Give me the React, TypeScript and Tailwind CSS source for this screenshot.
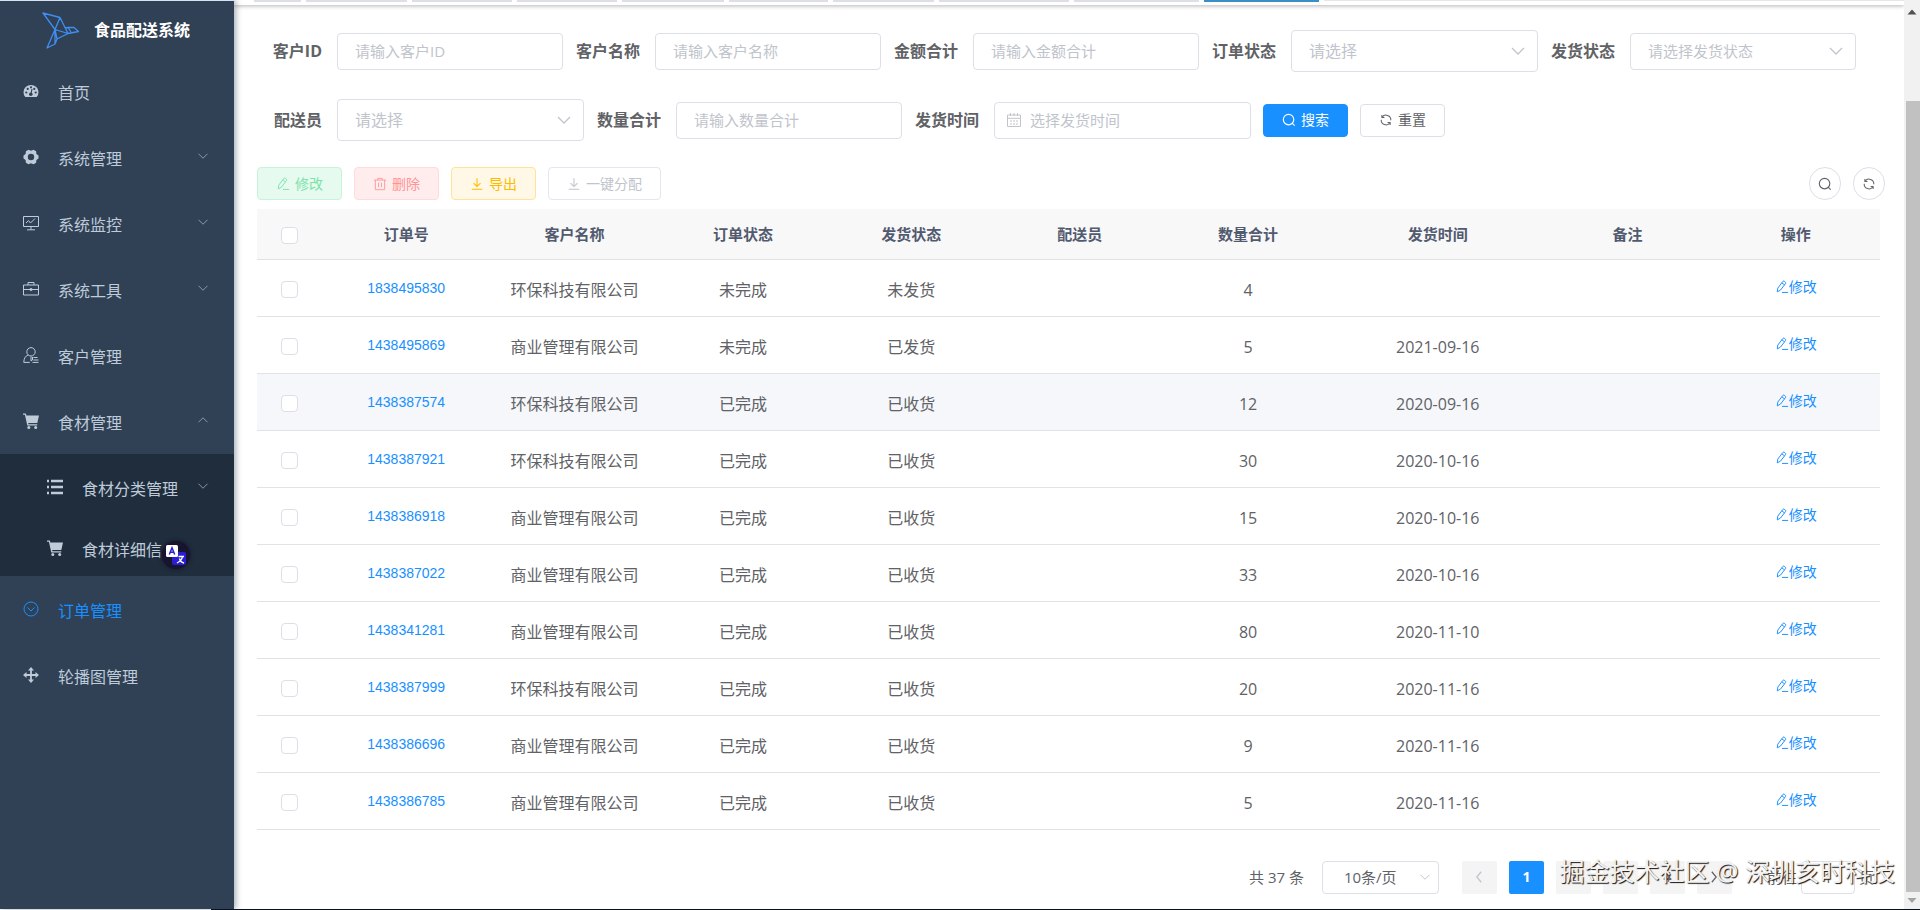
import React from 'react';

interface Order {
  no: string;
  customer: string;
  status: string;
  delivery: string;
  count: number;
  date: string;
}

const orders: Order[] = [
  { no: '1838495830', customer: '环保科技有限公司', status: '未完成', delivery: '未发货', count: 4, date: '' },
  { no: '1438495869', customer: '商业管理有限公司', status: '未完成', delivery: '已发货', count: 5, date: '2021-09-16' },
  { no: '1438387574', customer: '环保科技有限公司', status: '已完成', delivery: '已收货', count: 12, date: '2020-09-16' },
  { no: '1438387921', customer: '环保科技有限公司', status: '已完成', delivery: '已收货', count: 30, date: '2020-10-16' },
  { no: '1438386918', customer: '商业管理有限公司', status: '已完成', delivery: '已收货', count: 15, date: '2020-10-16' },
  { no: '1438387022', customer: '商业管理有限公司', status: '已完成', delivery: '已收货', count: 33, date: '2020-10-16' },
  { no: '1438341281', customer: '商业管理有限公司', status: '已完成', delivery: '已收货', count: 80, date: '2020-11-10' },
  { no: '1438387999', customer: '环保科技有限公司', status: '已完成', delivery: '已收货', count: 20, date: '2020-11-16' },
  { no: '1438386696', customer: '商业管理有限公司', status: '已完成', delivery: '已收货', count: 9, date: '2020-11-16' },
  { no: '1438386785', customer: '商业管理有限公司', status: '已完成', delivery: '已收货', count: 5, date: '2020-11-16' },
];

const HOVERED = '1438387574';

const columns = ['订单号', '客户名称', '订单状态', '发货状态', '配送员', '数量合计', '发货时间', '备注', '操作'];

const Line: React.FC<{ className?: string; children: React.ReactNode }> = ({ className = 'size-4', children }) => (
  <svg viewBox="0 0 16 16" className={`${className} shrink-0`} fill="none" stroke="currentColor" aria-hidden="true">
    {children}
  </svg>
);

const Chevron: React.FC<{ className?: string; up?: boolean }> = ({ className, up }) => (
  <Line className={className}>
    <path d={up ? 'M2 11l6-6 6 6' : 'M2 5l6 6 6-6'} strokeWidth="1.3" />
  </Line>
);

const EditIcon: React.FC<{ className?: string }> = ({ className = 'size-3.5' }) => (
  <Line className={className}>
    <path d="M2.6 13.6l.6-4.4L9 1.6c.4-.5 1-.5 1.5-.2l1.4 1.1c.5.4.6 1 .2 1.5l-5.800 7.500-3.700 2.100zM7.800 3.200l3.100 2.400M8 14.200h7" strokeWidth="1.1" />
  </Line>
);

const TrashIcon = () => (
  <Line className="size-3.5">
    <path d="M1 3.500h14M5.500 3.500V1.500h5v2M2.700 3.500v11h10.600v-11M6.300 6.500v5M9.700 6.500v5" />
  </Line>
);

const DownloadIcon = () => (
  <Line className="size-3.5">
    <path d="M8 1.500v9.500M4 7l4 4 4-4M2 14h12" strokeWidth="1.2" />
  </Line>
);

const SearchIcon = () => (
  <Line className="size-3.5">
    <circle cx="7.500" cy="7.500" r="6" strokeWidth="1.3" />
    <path d="M11.500 11.500l3 3" strokeWidth="1.3" />
  </Line>
);

const RefreshIcon = () => (
  <Line className="size-3.5">
    <path d="M3.500 4.800A5.500 5.500 0 0 1 13.500 8.300M2.500 7.700a5.500 5.500 0 0 0 10 3.500" strokeWidth="1.2" />
    <path d="M3.300 2.200v2.900h2.900M12.700 13.800v-2.900H9.800" strokeWidth="1.2" />
  </Line>
);

const CalendarIcon = () => (
  <Line className="size-4">
    <path d="M1.500 3h13v11.500h-13zM1.500 6.300h13M4.500 1v3M8 1v3M11.500 1v3" />
    <path d="M4 9h2M7 9h2M10 9h2M4 12h2M7 12h2M10 12h2" strokeWidth="1.2" />
  </Line>
);

const DashboardIcon = () => (
  <Line>
    <path d="M2.300 14A7.500 7.500 0 0 1 .5 9a7.500 7 0 0 1 15 0 7.500 7.500 0 0 1-1.800 5z" fill="currentColor" stroke="none" />
    <g fill="#304156" stroke="none">
      <circle cx="3.300" cy="9.500" r="1.100" />
      <circle cx="4.700" cy="5.900" r="1.100" />
      <circle cx="8" cy="4.300" r="1.100" />
      <circle cx="11.300" cy="5.900" r="1.100" />
      <circle cx="12.700" cy="9.500" r="1.100" />
      <circle cx="7.800" cy="11.300" r="1.800" />
    </g>
    <path d="M8 11l1-5" stroke="#304156" strokeWidth="1.100" />
  </Line>
);

const GearIcon = () => (
  <Line>
    <path
      d="M5.500.7l2.500 1 2.500-1 2.600 1.600.3 2.600 2.100 1.700v2.800l-2.100 1.700-.3 2.600-2.600 1.600-2.500-1-2.500 1-2.600-1.600-.3-2.600L.5 9.400V6.600l2.100-1.700.3-2.600zM8 4.800a3.200 3.200 0 1 0 0 6.400 3.200 3.200 0 0 0 0-6.400z"
      fill="currentColor"
      fillRule="evenodd"
      stroke="none"
    />
  </Line>
);

const MonitorIcon = () => (
  <Line>
    <path d="M.5 1.500h15v10H.5zM8 11.500v3M4 14.800h8M3 8l2.500-2.500 2 2.500L12 3.500" />
  </Line>
);

const ToolIcon = () => (
  <Line>
    <path d="M.5 4h15v10H.5zM5 4V1.500h6V4M.5 8.500h15" />
    <path d="M6.500 8.500h3M8 7v3" strokeWidth="1.600" />
  </Line>
);

const CustomerIcon = () => (
  <Line>
    <circle cx="8" cy="4.800" r="4.200" />
    <path d="M5 8C2.500 9 .8 11.500.8 15.400h6M8 9.500v4.500l1.500-1v-3M10.500 10.500h4M10.500 13h5M9.500 15.400h6" />
  </Line>
);

const CartIcon = () => (
  <Line>
    <path d="M0 .5h2.800l.6 2H16l-1.700 7.500H5.200l.3 1.300h8.700v1.200H4.300L1.900 1.700H0z" fill="currentColor" stroke="none" />
    <circle cx="5.800" cy="14.400" r="1.500" fill="currentColor" stroke="none" />
    <circle cx="12.700" cy="14.400" r="1.500" fill="currentColor" stroke="none" />
  </Line>
);

const ListIcon = () => (
  <Line>
    <path d="M0 2h2M4 2h12M0 8h2M4 8h12M0 14h2M4 14h12" strokeWidth="2.400" />
  </Line>
);

const OrderIcon = () => (
  <Line>
    <circle cx="8" cy="8" r="7" />
    <path d="M4.500 6.500L8 10l3.500-3.500" />
  </Line>
);

const MoveIcon = () => (
  <Line>
    <path d="M8 2v12M2 8h12" strokeWidth="1.800" />
    <path d="M8 0l3 3.500H5zM8 16l-3-3.500h6zM0 8l3.500-3v6zM16 8l-3.500 3V5z" fill="currentColor" stroke="none" />
  </Line>
);

const BirdLogo = () => (
  <svg viewBox="0 0 38 38" className="size-[38px] shrink-0" fill="none" stroke="#3f8ef0" strokeWidth="1.300" strokeLinejoin="round" aria-hidden="true">
    <path d="M1 1l17 4.500 8 16-13-4zM13 17.500L18 5.500M13 17.500L5 36l8-4 2-5zM13 32V17.500M15 27l11-5.500M26 21.500l10.500-2-4.500-4h-6l-3 .5M26 15.500l3 4.500" />
  </svg>
);

const TranslateBadge = () => (
  <span className="absolute top-[26px] left-[162px] flex size-7 items-center justify-center rounded-full bg-[#17152e] shadow-[0_0_4px_#17152e]">
    <svg viewBox="0 0 20 20" className="size-5" aria-hidden="true">
      <rect x="6" y="7" width="14" height="13" rx="2" fill="#2a1fd0" />
      <rect x="0" y="0" width="12" height="12" rx="1.500" fill="#fff" />
      <path d="M3.300 9.500L6 2.800l2.700 6.700M4.200 7.300h3.600" fill="none" stroke="#2a1fd0" strokeWidth="1.500" />
      <path d="M12.500 11.500h5.500M16.500 11.500c-.5 3-2.500 5-5.500 6.500M13.500 13.500c.5 2.500 2 3.800 4.500 4.500" fill="none" stroke="#fff" strokeWidth="1.300" />
    </svg>
  </span>
);

interface MenuItemProps {
  icon: React.ReactNode;
  label: string;
  arrow?: 'down' | 'up';
  active?: boolean;
  nested?: boolean;
  children?: React.ReactNode;
}

const MenuItem: React.FC<MenuItemProps> = ({ icon, label, arrow, active, nested, children }) => (
  <li className="relative">
    <a
      href="#"
      className={`flex items-center pr-[25px] text-base leading-6 ${nested ? 'h-[61px] pt-2 pl-[47px]' : 'h-[66px] pt-1 pl-[23px]'} ${active ? 'text-[#1890ff]' : 'text-[#bfcbd9]'}`}
    >
      <span className="mb-1">{icon}</span>
      <span className="ml-[19px] flex-1 whitespace-nowrap">{label}</span>
      {arrow ? <Chevron up={arrow === 'up'} className="mb-1.5 size-3 text-[#8c9aab]" /> : null}
    </a>
    {children}
  </li>
);

const Field: React.FC<{ id: string; label: string; children: React.ReactNode }> = ({ id, label, children }) => (
  <div className="flex items-center">
    <label htmlFor={id} className="w-20 pr-[15px] text-right text-base font-bold whitespace-nowrap text-[#606266]">
      {label}
    </label>
    {children}
  </div>
);

const TextField: React.FC<{ id: string; label: string }> = ({ id, label }) => (
  <Field id={id} label={label}>
    <input
      id={id}
      type="text"
      placeholder={`请输入${label}`}
      className="h-[37px] w-[226px] rounded border border-[#dcdfe6] bg-white pl-[17px] text-[15px] placeholder:text-[#c0c4cc]"
    />
  </Field>
);

const SelectField: React.FC<{ id: string; label: string; placeholder: string; small?: boolean }> = ({ id, label, placeholder, small }) => (
  <Field id={id} label={label}>
    <div className="relative">
      <select
        id={id}
        className={`block appearance-none rounded border border-[#dcdfe6] bg-white pl-[17px] text-[#c0c4cc] ${small ? 'h-[37px] w-[226px] text-[15px]' : 'h-[42px] w-[247px] text-base'}`}
      >
        <option>{placeholder}</option>
      </select>
      <span className="pointer-events-none absolute inset-y-0 right-3 flex items-center text-[#c0c4cc]">
        <Chevron />
      </span>
    </div>
  </Field>
);

const ToolButton: React.FC<{ className: string; icon: React.ReactNode; label: string }> = ({ className, icon, label }) => (
  <button type="button" className={`flex h-[33px] items-center gap-[5px] rounded border px-[18px] text-sm ${className}`}>
    {icon}
    {label}
  </button>
);

const Sidebar = () => (
  <aside className="z-10 w-[234px] shrink-0 border-t border-[#d6e4f2] bg-[#304156] shadow-[2px_0_6px_rgba(0,21,41,0.35)]">
    <div className="flex h-[57px] items-start pt-[11px] pl-[42px]">
      <BirdLogo />
      <h1 className="ml-3.5 pt-1.5 text-base leading-6 font-bold text-white">食品配送系统</h1>
    </div>
    <nav>
      <ul>
        <MenuItem icon={<DashboardIcon />} label="首页" />
        <MenuItem icon={<GearIcon />} label="系统管理" arrow="down" />
        <MenuItem icon={<MonitorIcon />} label="系统监控" arrow="down" />
        <MenuItem icon={<ToolIcon />} label="系统工具" arrow="down" />
        <MenuItem icon={<CustomerIcon />} label="客户管理" />
        <MenuItem icon={<CartIcon />} label="食材管理" arrow="up">
          <ul className="bg-[#1f2d3d]">
            <MenuItem nested icon={<ListIcon />} label="食材分类管理" arrow="down" />
            <MenuItem nested icon={<CartIcon />} label="食材详细信">
              <TranslateBadge />
            </MenuItem>
          </ul>
        </MenuItem>
        <MenuItem active icon={<OrderIcon />} label="订单管理" />
        <MenuItem icon={<MoveIcon />} label="轮播图管理" />
      </ul>
    </nav>
  </aside>
);

// Lower edge of the open-tab strip
const TabStrip = () => (
  <div className="flex h-[5px] items-start gap-[5px] bg-white pl-5 shadow-[0_1px_4px_rgba(0,0,0,0.3)]">
    <span className="h-0.5 w-[47px] bg-[#dcdfe6]" />
    <span className="h-0.5 w-[101px] bg-[#dcdfe6]" />
    <span className="h-0.5 w-[100px] bg-[#dcdfe6]" />
    <span className="h-0.5 w-[100px] bg-[#dcdfe6]" />
    <span className="h-0.5 w-[102px] bg-[#dcdfe6]" />
    <span className="h-0.5 w-[99px] bg-[#dcdfe6]" />
    <span className="h-0.5 w-[101px] bg-[#dcdfe6]" />
    <span className="h-0.5 w-[130px] bg-[#dcdfe6]" />
    <span className="h-0.5 w-[125px] bg-[#dcdfe6]" />
    <span className="h-0.5 w-[115px] bg-[#3a8fc4]" />
    <span className="h-px flex-1 bg-[#e4e6ea]" />
  </div>
);

const SearchForm = () => (
  <form className="flex flex-wrap items-center gap-x-3 gap-y-[27px]">
    <TextField id="customer-id" label="客户ID" />
    <TextField id="customer-name" label="客户名称" />
    <TextField id="amount" label="金额合计" />
    <SelectField id="order-status" label="订单状态" placeholder="请选择" />
    <SelectField id="delivery-status" label="发货状态" placeholder="请选择发货状态" small />
    <SelectField id="courier" label="配送员" placeholder="请选择" />
    <TextField id="count" label="数量合计" />
    <Field id="delivery-date" label="发货时间">
      <div className="relative">
        <input
          id="delivery-date"
          type="text"
          placeholder="选择发货时间"
          className="block h-[37px] w-[257px] rounded border border-[#dcdfe6] bg-white pl-[35px] text-[15px] placeholder:text-[#c0c4cc]"
        />
        <span className="pointer-events-none absolute inset-y-0 left-3 flex items-center text-[#c0c4cc]">
          <CalendarIcon />
        </span>
      </div>
    </Field>
    <ToolButton className="border-[#1890ff] bg-[#1890ff] text-white" icon={<SearchIcon />} label="搜索" />
    <ToolButton className="border-[#dcdfe6] bg-white text-[#606266]" icon={<RefreshIcon />} label="重置" />
  </form>
);

const Toolbar = () => (
  <div className="mt-[26px] flex items-center gap-3">
    <ToolButton className="border-[#c8f3db] bg-[#e7faf0] text-[#7be4a9]" icon={<EditIcon />} label="修改" />
    <ToolButton className="border-[#ffdbdb] bg-[#ffeded] text-[#ff9494]" icon={<TrashIcon />} label="删除" />
    <ToolButton className="border-[#ffe399] bg-[#fff8e6] text-[#ffba00]" icon={<DownloadIcon />} label="导出" />
    <ToolButton className="border-[#e3e6ec] bg-white text-[#c0c4cc]" icon={<DownloadIcon />} label="一键分配" />
    <div className="ml-auto flex gap-3">
      <button type="button" aria-label="搜索" className="flex h-[33px] w-8 items-center justify-center rounded-full border border-[#dcdfe6] text-[#606266]">
        <SearchIcon />
      </button>
      <button type="button" aria-label="刷新" className="flex h-[33px] w-8 items-center justify-center rounded-full border border-[#dcdfe6] text-[#606266]">
        <RefreshIcon />
      </button>
    </div>
  </div>
);

const CheckBox: React.FC<{ label: string }> = ({ label }) => (
  <input
    type="checkbox"
    aria-label={label}
    className="mx-auto mt-1 block size-[17px] appearance-none rounded-sm border border-[#dcdfe6] bg-white"
  />
);

const OrderTable = () => (
  <div className="mt-[9px] mr-[5px]">
    <table className="w-full table-fixed border-collapse text-center">
      <colgroup>
        <col className="w-[65px]" />
        <col />
        <col />
        <col />
        <col />
        <col />
        <col />
        <col className="w-[211px]" />
        <col />
        <col />
      </colgroup>
      <thead>
        <tr className="h-[50px] border-b border-[#dfe2e6] bg-[#f8f8f9] text-[15px] text-[#515a6e]">
          <th>
            <CheckBox label="全选" />
          </th>
          {columns.map((name) => (
            <th key={name} className="font-bold">{name}</th>
          ))}
        </tr>
      </thead>
      <tbody>
        {orders.map((order) => (
          <tr key={order.no} className={`h-[57px] border-b border-[#dfe2e6] text-base text-[#606266] ${order.no === HOVERED ? 'bg-[#f5f7fa]' : ''}`}>
            <td>
              <CheckBox label={order.no} />
            </td>
            <td>
              <a href="#" className="block font-['Liberation_Sans',sans-serif] text-sm text-[#1890ff]">{order.no}</a>
            </td>
            <td className="pt-1 whitespace-nowrap">{order.customer}</td>
            <td className="pt-1">{order.status}</td>
            <td className="pt-1">{order.delivery}</td>
            <td />
            <td className="pt-1">{order.count}</td>
            <td className="pt-1">{order.date}</td>
            <td />
            <td>
              <button type="button" className="inline-flex items-center text-sm text-[#1890ff]">
                <EditIcon />
                修改
              </button>
            </td>
          </tr>
        ))}
      </tbody>
    </table>
  </div>
);

const Pagination = () => (
  <div className="relative mt-[31px] mr-[11px] flex items-center justify-end text-[15px] text-[#606266]">
    <span>共 37 条</span>
    <div className="relative ml-[18px]">
      <select aria-label="每页条数" className="block h-[33px] w-[117px] appearance-none rounded border border-[#dcdfe6] bg-white pl-[21px] text-[15px]">
        <option>10条/页</option>
      </select>
      <span className="pointer-events-none absolute inset-y-0 right-2 flex items-center text-[#c0c4cc]">
        <Chevron className="size-3" />
      </span>
    </div>
    <div className="ml-[23px] flex gap-3 text-sm font-bold">
      <button type="button" aria-label="上一页" className="flex h-[33px] w-[35px] items-center justify-center rounded-xs bg-[#f4f4f5] text-[#c0c4cc]">
        <Line className="size-3.5">
          <path d="M10.500 2l-5 6 5 6" strokeWidth="1.400" />
        </Line>
      </button>
      <button type="button" className="h-[33px] w-[35px] rounded-xs bg-[#1890ff] text-white">1</button>
      <button type="button" className="h-[33px] w-[35px] rounded-xs bg-[#f4f4f5]">2</button>
      <button type="button" className="h-[33px] w-[35px] rounded-xs bg-[#f4f4f5]">3</button>
      <button type="button" className="h-[33px] w-[35px] rounded-xs bg-[#f4f4f5]">4</button>
      <button type="button" aria-label="下一页" className="flex h-[33px] w-[35px] items-center justify-center rounded-xs bg-[#f4f4f5]">
        <Line className="size-3.5">
          <path d="M5.500 2l5 6-5 6" strokeWidth="1.400" />
        </Line>
      </button>
    </div>
    <label htmlFor="goto-page" className="ml-[35px]">前往</label>
    <input id="goto-page" type="text" defaultValue="1" className="mx-1 h-[33px] w-[54px] rounded border border-[#dcdfe6] bg-white text-center text-sm" />
    <span>页</span>
    <span className="pointer-events-none absolute -top-2.5 -right-[21px] text-[25px] leading-10 whitespace-nowrap text-[#f2f2f2] [text-shadow:1px_1px_1px_#111]">
      掘金技术社区 @ 深圳亥时科技
    </span>
  </div>
);

const ScrollBar = () => (
  <div className="flex w-4 shrink-0 flex-col items-center bg-[#f1f1f1]" aria-hidden="true">
    <svg viewBox="0 0 16 20" className="h-5 w-4" fill="#505050">
      <path d="M3.500 14.500h9L8 9.500z" />
    </svg>
    <div className="mt-[81px] w-3.5 flex-1 self-end bg-[#c1c1c1]" />
    <svg viewBox="0 0 16 17" className="h-[17px] w-4" fill="#a3a3a3">
      <path d="M3.500 6h9L8 11z" />
    </svg>
  </div>
);

export default function App() {
  return (
    <div className="flex min-h-screen flex-col bg-white font-['Open_Sans','Noto_Sans_CJK_SC',sans-serif]">
      <div className="flex flex-1">
        <Sidebar />
        <div className="flex min-w-0 flex-1 flex-col">
          <TabStrip />
          <main className="flex-1 pt-[25px] pr-[19px] pb-3.5 pl-[23px]">
            <SearchForm />
            <Toolbar />
            <OrderTable />
            <Pagination />
          </main>
        </div>
        <ScrollBar />
      </div>
      <div className="ml-[211px] h-px bg-[#0b1020]" />
    </div>
  );
}
